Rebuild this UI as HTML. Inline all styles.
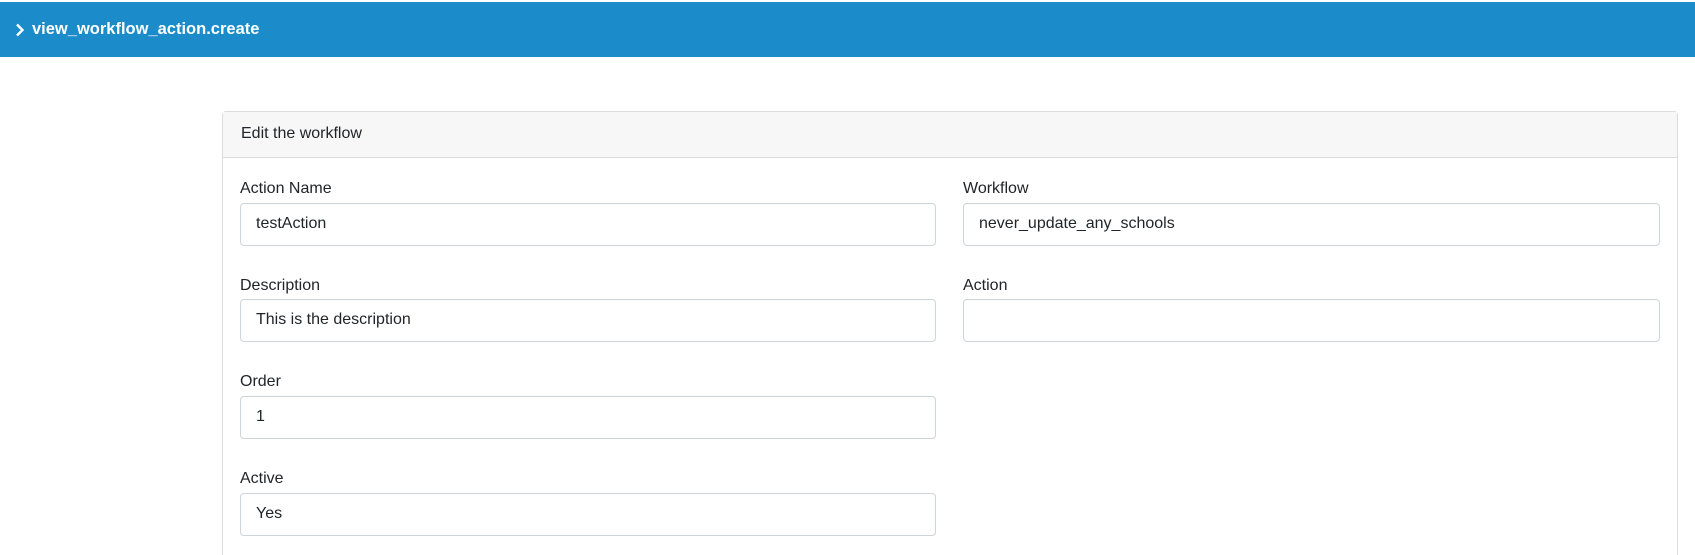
<!DOCTYPE html>
<html style="height:555px;overflow:hidden"><head><style>
body{margin:0;width:1695px;height:555px;overflow:hidden;background:#fff;font-family:"Liberation Sans",sans-serif;color:#212529;position:relative}
.hdr{position:absolute;left:0;top:0;width:1695px;height:57px;background:#1b8bca;border-top:2px solid #fff;box-sizing:border-box}
.hdr span{position:absolute;left:32px;top:18px;color:#fff;font-weight:bold;font-size:16.5px}
.hdr svg{position:absolute;left:15px;top:21px}
.card{position:absolute;left:222px;top:111px;width:1456px;height:444px;border:1px solid #dcdcdc;border-bottom:none;border-radius:4px 4px 0 0;box-sizing:border-box}
.ch{height:46px;background:#f7f7f7;border-bottom:1px solid #dcdcdc;box-sizing:border-box;padding:13px 18px;font-size:16px}
.l{position:absolute;font-size:16px}
.i{position:absolute;height:43px;border:1px solid #ced4da;border-radius:4px;box-sizing:border-box;padding:11px 15px;font-size:16px}
</style></head><body>
<div class="hdr"><svg width="10" height="14" viewBox="0 0 10 14"><path d="M2 1.5L7.5 7L2 12.5" stroke="#fff" stroke-width="2.4" fill="none"/></svg><span>view_workflow_action.create</span></div>
<div class="card"><div class="ch">Edit the workflow</div></div>
<div class="l" style="left:240px;top:180px">Action Name</div>
<div class="i" style="left:240px;top:203px;width:696px">testAction</div>
<div class="l" style="left:963px;top:180px">Workflow</div>
<div class="i" style="left:963px;top:203px;width:697px">never_update_any_schools</div>
<div class="l" style="left:240px;top:277px">Description</div>
<div class="i" style="left:240px;top:299px;width:696px">This is the description</div>
<div class="l" style="left:963px;top:277px">Action</div>
<div class="i" style="left:963px;top:299px;width:697px"></div>
<div class="l" style="left:240px;top:373px">Order</div>
<div class="i" style="left:240px;top:396px;width:696px">1</div>
<div class="l" style="left:240px;top:470px">Active</div>
<div class="i" style="left:240px;top:493px;width:696px">Yes</div>
</body></html>
